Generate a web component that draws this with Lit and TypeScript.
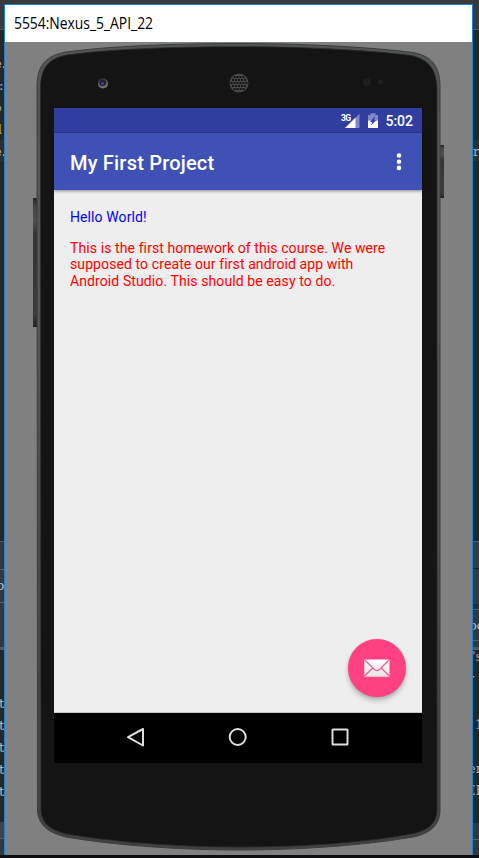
import { LitElement, html, css, svg } from "lit";
import { customElement, property } from "lit/decorators.js";
import { styleMap } from "lit/directives/style-map.js";

interface Band { h: number; bg: string; }
interface Snip { y: number; text: string; color: string; x: number; }

/** Narrow visible slice of the code editor behind the emulator window. */
@customElement("editor-strip")
class EditorStrip extends LitElement {
  @property({ attribute: false }) bands: Band[] = [];
  @property({ attribute: false }) snips: Snip[] = [];
  static styles = css`
    :host { display: block; position: relative; overflow: hidden; height: 855px; background: #242525; }
    .snip { position: absolute; font: 13px/18px "Liberation Mono", monospace; font-family: "DejaVu Serif", serif; white-space: pre; }
  `;
  render() {
    return html`
      ${this.bands.map((b) => html`<div style=${styleMap({ height: `${b.h}px`, background: b.bg })}></div>`)}
      ${this.snips.map((s) => html`<span class="snip" style=${styleMap({ top: `${s.y - 9}px`, left: `${s.x}px`, color: s.color })}>${s.text}</span>`)}
    `;
  }
}

/** Body of the handset, drawn behind its screen. */
@customElement("phone-shell")
class PhoneShell extends LitElement {
  static styles = css`
    :host { display: block; width: 467px; height: 813px; }
    svg { display: block; }
  `;
  render() {
    const mesh = [];
    for (let r = 0; r < 7; r++) {
      for (let c = 0; c < 7; c++) {
        const x = 225 + c * 3 + (r % 2 ? 1.5 : 0);
        const y = 32 + r * 3;
        if (Math.hypot(x - 234, y - 41) < 8.8) mesh.push(svg`<rect x=${x - 1} y=${y - 1} width="2" height="2" fill="#151515"/>`);
      }
    }
    const body = "M32 45C32 22 42 13.500 61 10C105 4 170 1.500 234 1.500C298 1.500 364 5 408 10.500C426 14 435 23 435 45V768C435 782 427 790 411 794.500C362 803 299 808 234 808C169 808 104 802.500 61 795C42 790.500 33 782 32.500 768Z";
    const face = "M35.500 47C35.500 25 44 16.500 62 13C105 7 170 4.700 234 4.700C298 4.700 362 8 406 13.500C423 17 432 27 432 48V767C432 780 425 787.500 409 791.500C361 800.500 299 805 234 805C169 805 105 799.500 62 792C44 788 36 780 36 767Z";
    return html`<svg width="467" height="813" viewBox="0 0 467 813">
      <defs>
        <linearGradient id="key" x1="0" y1="0" x2="0" y2="1">
          <stop offset="0" stop-color="#252525"/><stop offset=".06" stop-color="#444"/>
          <stop offset=".18" stop-color="#505050"/><stop offset=".28" stop-color="#343434"/>
          <stop offset=".9" stop-color="#3c3c3c"/><stop offset="1" stop-color="#222"/>
        </linearGradient>
        <linearGradient id="edge" x1="0" y1="0" x2="0" y2="1">
          <stop offset="0" stop-color="#505354"/><stop offset=".3" stop-color="#55565a"/>
          <stop offset=".7" stop-color="#484848"/><stop offset="1" stop-color="#414141"/>
        </linearGradient>
        <radialGradient id="lens" cx=".45" cy=".35">
          <stop offset="0" stop-color="#4040a0"/><stop offset=".4" stop-color="#23232e"/>
          <stop offset=".75" stop-color="#444"/><stop offset="1" stop-color="#777"/>
        </radialGradient>
      </defs>
      <rect x="28" y="156" width="5" height="129" fill="url(#key)"/>
      <rect x="434" y="103" width="5" height="53" fill="url(#key)"/>
      <path d=${body} fill="url(#edge)" stroke="#3d3e3e" stroke-width="1"/>
      <path d=${face} fill="#141414" stroke="#292a2b" stroke-width=".8"/>
      <circle cx="98" cy="41.500" r="5" fill="url(#lens)"/>
      <circle cx="97.800" cy="41" r="3" fill="#20202b"/>
      <circle cx="97.500" cy="41.500" r="1.300" fill="#4549b5"/>
      <circle cx="234" cy="41" r="9.500" fill="#474747"/>
      ${mesh}
      <circle cx="362" cy="40" r="4" fill="#211c1d"/><circle cx="375.500" cy="40" r="2.500" fill="#221d1e"/>
    </svg>`;
  }
}

/** The running Android application with its system bars. */
@customElement("device-screen")
class DeviceScreen extends LitElement {
  static styles = css`
    :host { display: flex; flex-direction: column; width: 368px; height: 655px; font-family: Roboto, sans-serif; background: #eee; }
    .status { height: 25px; box-sizing: border-box; background: #303f9f; display: flex; justify-content: flex-end; align-items: center; padding-right: 9px; color: #fff; border-bottom: 1px solid #2d3a91; }
    .status svg { display: block; }
    .clock { font-size: 14px; font-weight: 500; line-height: 24px; margin-left: 4px; padding-top: 2px; }
    .toolbar { height: 57px; box-sizing: border-box; flex: none; background: #3f51b5; display: flex; align-items: center; justify-content: space-between; padding: 0 19px 0 16px; color: #fff; box-shadow: 0 1px 3px rgba(0,0,0,.45); z-index: 1; }
    h1 { margin: 0; font-size: 20px; font-weight: 500; line-height: 24px; letter-spacing: .2px; padding-top: 2px; }
    .main { flex: 1; position: relative; padding: 19px 16px 0; font-size: 14px; line-height: 16.600px; letter-spacing: .1px; border-bottom: 1px solid #c8c8c8; }
    p { margin: 0; white-space: nowrap; }
    .hello { color: #00f; }
    .body { color: #f00; margin-top: 14px; }
    .fab { position: absolute; right: 16.500px; bottom: 15.500px; width: 57.500px; height: 57.500px; border-radius: 50%; background: #ff4081; box-shadow: 0 4px 5px rgba(0,0,0,.2), 0 1px 3px rgba(0,0,0,.15); display: grid; place-items: center; }
    .nav { height: 50px; flex: none; background: #000; }
    .nav svg { display: block; }
  `;
  render() {
    return html`
      <div class="status">
        <svg width="40" height="24" viewBox="0 0 40 24">
          <text x="0" y="12.500" font-family="Roboto, sans-serif" font-size="8.500" font-weight="700" fill="#fff" textLength="10">3G</text>
          <path d="M14 10.500L18.500 5.500V20H14Z" fill="#8089c4"/>
          <path d="M4 20L14.500 9.500V20Z" fill="#fff"/>
          <path d="M27 7h2.500V5.300h5V7H37v5.500H27Z" fill="#8089c4"/>
          <path d="M27 12.500H37V20H27Z" fill="#fff"/>
          <path d="M34.300 8L29 14H31.300L30 17.500L35.300 12.200H33Z" fill="#303f9f"/>
        </svg>
        <span class="clock">5:02</span>
      </div>
      <div class="toolbar">
        <h1>My First Project</h1>
        <svg width="8" height="20" viewBox="0 0 8 20"><g fill="#fff"><circle cx="4" cy="3.500" r="2.300"/><circle cx="4" cy="9.700" r="2.300"/><circle cx="4" cy="15.900" r="2.300"/></g></svg>
      </div>
      <div class="main">
        <p class="hello">Hello World!</p>
        <p class="body">This is the first homework of this course. We were<br>supposed to create our first android app with<br>Android Studio. This should be easy to do.</p>
        <div class="fab">
          <svg width="26" height="18" viewBox="0 0 26 18">
            <defs><linearGradient id="mail" x1="0" y1="0" x2="0" y2="1"><stop offset="0" stop-color="#fff"/><stop offset="1" stop-color="#e2e2e2"/></linearGradient></defs>
            <rect x=".3" y=".5" width="25.200" height="17.300" rx=".8" fill="url(#mail)"/>
            <path d="M.5 .8L10.300 10.300Q13 12.800 15.700 10.300L25.300 .8M.5 17L8.800 9M25.300 17L17.200 9" fill="none" stroke="#ee5d8f" stroke-width="1.200"/>
          </svg>
        </div>
      </div>
      <div class="nav">
        <svg width="368" height="50" viewBox="0 0 368 50" fill="none" stroke="#dedede" stroke-width="2" stroke-linejoin="round">
          <path d="M89 16V32.500L74 24.200Z"/><circle cx="183.700" cy="24" r="8"/><rect x="278.500" y="16.500" width="15" height="15" rx=".5"/>
        </svg>
      </div>
    `;
  }
}

const codeColor = "#a9b7c6";
const leftBands: Band[] = [
  { h: 29, bg: "#383b3c" }, { h: 1, bg: "#555759" }, { h: 110, bg: "#252626" }, { h: 21, bg: "#2d2e2e" }, { h: 380, bg: "#252626" },
  { h: 1, bg: "#555759" }, { h: 27, bg: "#35383a" }, { h: 1, bg: "#5a5c5d" }, { h: 32, bg: "#35383a" }, { h: 1, bg: "#5a5c5d" },
  { h: 44, bg: "#35383a" }, { h: 3, bg: "#555759" }, { h: 172, bg: "#252626" }, { h: 16, bg: "#414446" }, { h: 1, bg: "#5a5c5d" }, { h: 16, bg: "#35383a" },
];
const rightBands: Band[] = [
  { h: 29, bg: "#383b3c" }, { h: 1, bg: "#555759" }, { h: 110, bg: "#252626" }, { h: 21, bg: "#2d2e2e" }, { h: 380, bg: "#252626" },
  { h: 1, bg: "#555759" }, { h: 26, bg: "#383c3e" }, { h: 1, bg: "#222" }, { h: 35, bg: "#383b3d" }, { h: 5, bg: "#2b2d2e" }, { h: 1, bg: "#5a5c5d" },
  { h: 30, bg: "#35383a" }, { h: 1, bg: "#5a5c5d" }, { h: 6, bg: "#35383a" }, { h: 3, bg: "#555759" }, { h: 173, bg: "#252626" }, { h: 16, bg: "#35383a" }, { h: 1, bg: "#5a5c5d" }, { h: 15, bg: "#35383a" },
];
const leftSnips: Snip[] = [
  { y: 64, text: "e.", color: "#c4ad84", x: -6 }, { y: 86, text: ":", color: codeColor, x: -1 }, { y: 108, text: "o", color: "#8da080", x: -6 },
  { y: 130, text: "l", color: "#a8a040", x: -2 }, { y: 152, text: "e.", color: "#c4ad84", x: -6 }, { y: 586, text: "p", color: "#b5c1cc", x: -4 },
  ...[704, 726, 748, 770, 792].map((y) => ({ y, text: "t", color: "#bbb", x: -1 })),
];
const rightSnips: Snip[] = [
  { y: 152, text: "r", color: "#9cb0cc", x: 0 }, { y: 626, text: "oo", color: "#bbb", x: -4 }, { y: 657, text: "'s", color: "#c58f82", x: -1 },
  { y: 679, text: "y", color: "#bbb", x: -6 }, { y: 725, text: "1", color: "#91a9c4", x: 2 }, { y: 769, text: "er", color: "#aaa", x: -5 }, { y: 791, text: "EE", color: "#aaa", x: -7 },
];

@customElement("app-root")
class AppRoot extends LitElement {
  static styles = css`
    :host { display: block; width: 479px; height: 858px; overflow: hidden; background: #0e0d0f; }
    .desktop { display: grid; grid-template-columns: 4px 469px 6px; height: 855px; }
    .column { display: flex; flex-direction: column; }
    .above { height: 4px; background: #383b3c; flex: none; }
    .window { flex: 1; border: 1px solid #1883d7; border-bottom: 0; background: #808080; display: flex; flex-direction: column; }
    .title { height: 37px; background: #fff; color: #000; font: 16px/36px "Open Sans", sans-serif; padding-left: 9px; box-sizing: border-box; flex: none; }
    .title span { display: inline-block; transform-origin: left; transform: scaleX(.867); }
    .stage { display: grid; height: 813px; }
    .stage > * { grid-area: 1 / 1; }
    device-screen { margin: 66px 0 0 49px; }
  `;
  render() {
    return html`<div class="desktop">
      <editor-strip .bands=${leftBands} .snips=${leftSnips}></editor-strip>
      <div class="column">
        <div class="above"></div>
        <div class="window">
          <div class="title"><span>5554:Nexus_5_API_22</span></div>
          <div class="stage"><phone-shell></phone-shell><device-screen></device-screen></div>
        </div>
      </div>
      <editor-strip .bands=${rightBands} .snips=${rightSnips}></editor-strip>
    </div>`;
  }
}
